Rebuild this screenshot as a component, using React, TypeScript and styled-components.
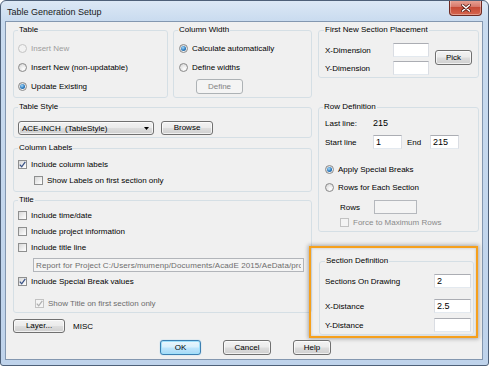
import React from 'react'
import styled, { createGlobalStyle, css } from 'styled-components'

const GlobalStyle = createGlobalStyle`
  html, body {
    margin: 0;
    padding: 0;
    background: #fff;
  }
  body {
    font-family: "Liberation Sans", Arial, sans-serif;
    font-size: 8px;
    color: #000;
  }
  * {
    box-sizing: border-box;
  }
`

const Window = styled.div`
  width: 489px;
  height: 366px;
  border: 1px solid #4e6078;
  border-radius: 6px 6px 3px 3px;
  background: linear-gradient(180deg, #dce8f5 0px, #c9dbef 20px, #bfd3eb 100%);
  padding: 0 5px 5px 4px;
  display: flex;
  flex-direction: column;
  overflow: hidden;
`

const TitleBar = styled.div`
  height: 20px;
  display: flex;
  align-items: flex-start;
  justify-content: space-between;
`

const Title = styled.div`
  font-size: 9px;
  line-height: 20px;
  padding: 1px 0 0 2px;
  color: #1a1a1a;
`

const CloseButton = styled.div`
  width: 33px;
  height: 16px;
  margin: -1px 1px 0 0;
  border: 1px solid #6e2a22;
  border-top: none;
  border-radius: 0 0 4px 4px;
  background: linear-gradient(180deg, #e9a899 0%, #d7786a 45%, #c64b36 50%, #d6654e 100%);
  box-shadow: inset 0 0 0 1px rgba(255, 255, 255, 0.35);
  display: flex;
  align-items: center;
  justify-content: center;
`

const Client = styled.div`
  flex: 1;
  background: #f0f0f0;
  border: 1px solid #8397b0;
  display: flex;
  flex-direction: column;
`

const Columns = styled.div`
  display: grid;
  grid-template-columns: 299px 161px;
  column-gap: 6px;
  padding: 3px 0 0 7px;
  align-items: start;
`

const Column = styled.div`
  display: flex;
  flex-direction: column;
`

const TopRow = styled.div`
  display: flex;
  gap: 5px;
`

const GroupBox = styled.fieldset<{ $w?: number; $h: number; $pt: number; $pad?: number; $mt?: number }>`
  margin: ${({ $mt }) => $mt ?? 0}px 0 0 0;
  min-width: 0;
  width: ${({ $w }) => ($w ? `${$w}px` : 'auto')};
  height: ${({ $h }) => $h}px;
  border: 1px solid #d5dfe5;
  border-radius: 3px;
  padding: ${({ $pt }) => $pt}px 2px 0 ${({ $pad }) => $pad ?? 4}px;
  display: flex;
  flex-direction: column;
`

const Legend = styled.legend<{ $shift?: number }>`
  font-size: 8px;
  line-height: 10px;
  padding: 0 1px;
  margin-left: ${({ $shift }) => $shift ?? 0}px;
  color: #000;
`

const OptionRow = styled.div<{ $h: number; $mt?: number; $indent?: number; $tone?: string }>`
  height: ${({ $h }) => $h}px;
  margin: ${({ $mt }) => $mt ?? 0}px 0 0 ${({ $indent }) => $indent ?? 0}px;
  display: flex;
  align-items: center;
  gap: 4px;
  white-space: nowrap;
  color: ${({ $tone }) => $tone ?? '#000'};
`

const Radio = styled.span<{ $checked?: boolean; $disabled?: boolean }>`
  position: relative;
  width: 9px;
  height: 9px;
  flex: none;
  border-radius: 50%;
  border: 1px solid ${({ $disabled }) => ($disabled ? '#c4c4c4' : '#8a8a8a')};
  background: ${({ $disabled }) =>
    $disabled
      ? '#f2f2f2'
      : 'radial-gradient(circle at 65% 70%, #ffffff 0%, #e6e6e6 55%, #cfcfcf 100%)'};
  ${({ $checked }) =>
    $checked &&
    css`
      &::after {
        content: '';
        position: absolute;
        left: 1px;
        top: 1px;
        width: 5px;
        height: 5px;
        border-radius: 50%;
        background: radial-gradient(circle at 40% 35%, #a9dcfa 0%, #2c7bc0 55%, #144c7e 100%);
      }
    `}
`

const CheckBox = styled.span<{ $disabled?: boolean }>`
  width: 9px;
  height: 9px;
  flex: none;
  border: 1px solid ${({ $disabled }) => ($disabled ? '#c2c2c2' : '#8e8f8f')};
  background: ${({ $disabled }) =>
    $disabled ? '#f4f4f4' : 'linear-gradient(135deg, #d8d8d8 0%, #f4f4f4 70%, #ffffff 100%)'};
  display: flex;
  align-items: center;
  justify-content: center;
`

const Row = styled.div<{ $h: number; $mt?: number; $indent?: number }>`
  height: ${({ $h }) => $h}px;
  margin: ${({ $mt }) => $mt ?? 0}px 0 0 ${({ $indent }) => $indent ?? 0}px;
  display: flex;
  align-items: center;
  white-space: nowrap;
`

const Label = styled.span<{ $w?: number; $ml?: number }>`
  width: ${({ $w }) => ($w ? `${$w}px` : 'auto')};
  margin-left: ${({ $ml }) => $ml ?? 0}px;
  flex: none;
`

const Value = styled.span`
  font-size: 9px;
`

const TextBox = styled.input<{ $w: number; $ml?: number }>`
  width: ${({ $w }) => $w}px;
  height: 14px;
  margin: 0 0 0 ${({ $ml }) => $ml ?? 0}px;
  padding: 0 2px;
  border: 1px solid #abadb3;
  border-left-color: #dadde3;
  border-right-color: #dadde3;
  border-bottom-color: #e3e9ef;
  background: #fff;
  font-family: "Liberation Sans", Arial, sans-serif;
  font-size: 9px;
  color: #000;
  outline: none;
  flex: none;

  &:disabled {
    background: #f4f4f4;
    border-color: #b5b8bd;
    color: #6d6d6d;
  }
`

const ReportBox = styled(TextBox)`
  margin-top: 3px;
  margin-left: 15px;
  font-size: 8px;
  letter-spacing: 0.1px;
  background: #f4f4f4;
  border-color: #b2b5ba;
  color: #6d6d6d;
`

const Button = styled.button<{ $w: number; $h?: number; $default?: boolean; $ml?: number; $mb?: number }>`
  width: ${({ $w }) => $w}px;
  height: ${({ $h }) => $h ?? 15}px;
  margin: 0 0 ${({ $mb }) => $mb ?? 0}px ${({ $ml }) => $ml ?? 0}px;
  padding: 0;
  flex: none;
  border: 1px solid #707070;
  border-radius: 3px;
  background: linear-gradient(180deg, #f2f2f2 0%, #ebebeb 48%, #dddddd 52%, #cfcfcf 100%);
  box-shadow: inset 0 0 0 1px rgba(255, 255, 255, 0.7);
  font-family: "Liberation Sans", Arial, sans-serif;
  font-size: 8px;
  color: #000;
  line-height: 1;

  ${({ $default }) =>
    $default &&
    css`
      border-color: #3c7fb1;
      background: linear-gradient(180deg, #eaf6fd 0%, #d9f0fc 48%, #bee6fd 52%, #a7d9f5 100%);
      box-shadow: inset 0 0 0 1px #9fe0fb, 0 0 1px #5eb5e5;
    `}

  &:disabled {
    border-color: #adb2b5;
    background: #f4f4f4;
    box-shadow: none;
    color: #838383;
  }
`

const Combo = styled.div`
  width: 136px;
  height: 14px;
  border: 1px solid #707070;
  border-radius: 3px;
  background: linear-gradient(180deg, #f2f2f2 0%, #ebebeb 48%, #dddddd 52%, #cfcfcf 100%);
  box-shadow: inset 0 0 0 1px rgba(255, 255, 255, 0.7);
  display: flex;
  align-items: center;
  justify-content: space-between;
  padding: 0 4px 0 3px;
  white-space: pre;
`

const LayerRow = styled.div`
  margin-top: 6px;
  height: 14px;
  display: flex;
  align-items: center;
  gap: 8px;
`

const Highlight = styled.div`
  margin: 14px 0 0 -9px;
  width: 169px;
  height: 92px;
  border: 2px solid #f6a01c;
  padding: 8px 2px 0 8px;
  box-shadow: 0 0 4px 1px rgba(0, 0, 0, 0.3), inset 0 0 3px rgba(0, 0, 0, 0.2);
`

const FieldGrid = styled.div`
  display: grid;
  grid-template-columns: 68px 36px;
  grid-auto-rows: 14px;
  row-gap: 4px;
  align-items: center;
`

const PlacementBody = styled.div`
  display: flex;
  align-items: center;
`

const ButtonRow = styled.div`
  margin-top: 2px;
  padding-left: 3px;
  display: flex;
  justify-content: center;
  gap: 22px;
`

const Check = ({ color = '#3b5487' }: { color?: string }) => (
  <svg width="7" height="7" viewBox="0 0 7 7">
    <path d="M0.8 3.6 L2.7 5.8 L6.3 0.9" fill="none" stroke={color} strokeWidth="1.3" />
  </svg>
)

const Arrow = () => (
  <svg width="5" height="3" viewBox="0 0 5 3">
    <path d="M0 0 H5 L2.5 3 Z" fill="#000" />
  </svg>
)

const CloseGlyph = () => (
  <svg width="10" height="8" viewBox="0 0 10 8">
    <path d="M1.5 1 L8.5 7 M8.5 1 L1.5 7" stroke="#5a1d14" strokeWidth="3" strokeLinecap="round" />
    <path d="M1.5 1 L8.5 7 M8.5 1 L1.5 7" stroke="#fff" strokeWidth="1.6" strokeLinecap="round" />
  </svg>
)

export default function App() {
  return (
    <>
      <GlobalStyle />
      <Window>
        <TitleBar>
          <Title>Table Generation Setup</Title>
          <CloseButton>
            <CloseGlyph />
          </CloseButton>
        </TitleBar>
        <Client>
          <Columns>
            <Column>
              <TopRow>
                <GroupBox $w={155} $h={73} $pt={4}>
                  <Legend>Table</Legend>
                  <OptionRow $h={19} $tone="#9d9d9d">
                    <Radio $disabled />
                    Insert New
                  </OptionRow>
                  <OptionRow $h={19}>
                    <Radio />
                    Insert New (non-updatable)
                  </OptionRow>
                  <OptionRow $h={19}>
                    <Radio $checked />
                    Update Existing
                  </OptionRow>
                </GroupBox>
                <GroupBox $w={139} $h={73} $pt={4} $pad={5}>
                  <Legend $shift={-1}>Column Width</Legend>
                  <OptionRow $h={19}>
                    <Radio $checked />
                    Calculate automatically
                  </OptionRow>
                  <OptionRow $h={19}>
                    <Radio />
                    Define widths
                  </OptionRow>
                  <Row $h={15} $mt={2}>
                    <Button $w={47} $ml={17} disabled>
                      Define
                    </Button>
                  </Row>
                </GroupBox>
              </TopRow>

              <GroupBox $h={36} $pt={9} $mt={4}>
                <Legend>Table Style</Legend>
                <Row $h={14}>
                  <Combo>
                    <span>ACE-INCH  (TableStyle)</span>
                    <Arrow />
                  </Combo>
                  <Button $w={52} $h={14} $ml={7}>
                    Browse
                  </Button>
                </Row>
              </GroupBox>

              <GroupBox $h={49} $pt={3} $mt={5}>
                <Legend>Column Labels</Legend>
                <OptionRow $h={16}>
                  <CheckBox>
                    <Check />
                  </CheckBox>
                  Include column labels
                </OptionRow>
                <OptionRow $h={16} $indent={16}>
                  <CheckBox />
                  Show Labels on first section only
                </OptionRow>
              </GroupBox>

              <GroupBox $h={118} $pt={2} $mt={3}>
                <Legend>Title</Legend>
                <OptionRow $h={16}>
                  <CheckBox />
                  Include time/date
                </OptionRow>
                <OptionRow $h={16}>
                  <CheckBox />
                  Include project information
                </OptionRow>
                <OptionRow $h={16}>
                  <CheckBox />
                  Include title line
                </OptionRow>
                <ReportBox
                  $w={271}
                  readOnly
                  value="Report for Project C:/Users/mumenp/Documents/AcadE 2015/AeData/proj/Wddemo/Wddemo.wdp"
                />
                <OptionRow $h={16} $mt={1}>
                  <CheckBox>
                    <Check />
                  </CheckBox>
                  Include Special Break values
                </OptionRow>
                <OptionRow $h={16} $mt={6} $indent={17} $tone="#6d6d6d">
                  <CheckBox $disabled>
                    <Check color="#b0b0b0" />
                  </CheckBox>
                  Show Title on first section only
                </OptionRow>
              </GroupBox>

              <LayerRow>
                <Button $w={52} $h={14}>
                  Layer...
                </Button>
                <span>MISC</span>
              </LayerRow>
            </Column>

            <Column>
              <GroupBox $h={53} $pt={8} $pad={6}>
                <Legend $shift={-1}>First New Section Placement</Legend>
                <PlacementBody>
                  <FieldGrid>
                    <Label>X-Dimension</Label>
                    <TextBox $w={36} defaultValue="" />
                    <Label>Y-Dimension</Label>
                    <TextBox $w={36} defaultValue="" />
                  </FieldGrid>
                  <Button $w={37} $ml={6} $mb={3}>
                    Pick
                  </Button>
                </PlacementBody>
              </GroupBox>

              <GroupBox $h={130} $pt={4} $pad={6} $mt={24}>
                <Legend $shift={-2}>Row Definition</Legend>
                <Row $h={14}>
                  <Label $w={48}>Last line:</Label>
                  <Value>215</Value>
                </Row>
                <Row $h={14} $mt={5}>
                  <Label $w={48}>Start line</Label>
                  <TextBox $w={29} defaultValue="1" />
                  <Label $w={23} $ml={5}>
                    End
                  </Label>
                  <TextBox $w={29} defaultValue="215" />
                </Row>
                <OptionRow $h={18} $mt={11}>
                  <Radio $checked />
                  Apply Special Breaks
                </OptionRow>
                <OptionRow $h={18}>
                  <Radio />
                  Rows for Each Section
                </OptionRow>
                <Row $h={14} $mt={4} $indent={15}>
                  <Label $w={34}>Rows</Label>
                  <TextBox $w={43} disabled defaultValue="" />
                </Row>
                <OptionRow $h={10} $mt={3} $indent={15} $tone="#8a8a8a">
                  <CheckBox $disabled />
                  Force to Maximum Rows
                </OptionRow>
              </GroupBox>

              <Highlight>
                <GroupBox $h={79} $pt={8} $pad={5}>
                  <Legend>Section Definition</Legend>
                  <Row $h={14}>
                    <Label $w={109}>Sections On Drawing</Label>
                    <TextBox $w={37} defaultValue="2" />
                  </Row>
                  <Row $h={14} $mt={11}>
                    <Label $w={109}>X-Distance</Label>
                    <TextBox $w={37} defaultValue="2.5" />
                  </Row>
                  <Row $h={14} $mt={5}>
                    <Label $w={109}>Y-Distance</Label>
                    <TextBox $w={37} defaultValue="" />
                  </Row>
                </GroupBox>
              </Highlight>
            </Column>
          </Columns>

          <ButtonRow>
            <Button $w={41} $default>
              OK
            </Button>
            <Button $w={48}>Cancel</Button>
            <Button $w={38}>Help</Button>
          </ButtonRow>
        </Client>
      </Window>
    </>
  )
}
